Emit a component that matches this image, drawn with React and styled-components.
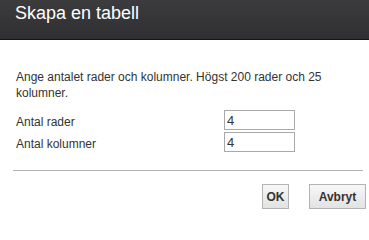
import React from "react";
import styled, { createGlobalStyle } from "styled-components";

const Global = createGlobalStyle`
  html, body { margin: 0; padding: 0; background: #fff; }
  body { font-family: "Liberation Sans", Arial, sans-serif; }
`;

const Dialog = styled.div`
  width: 369px;
  height: 216px;
  background: #fff;
  display: flex;
  flex-direction: column;
  overflow: hidden;
`;

const Header = styled.div`
  height: 40px;
  box-sizing: border-box;
  padding: 3px 15px 0;
  background: linear-gradient(#3c3c3e, #2f2f31);
  border-bottom: 1px solid #141414;
`;

const Title = styled.h1`
  margin: 0;
  font-size: 18px;
  font-weight: normal;
  line-height: 21px;
  color: #fff;
`;

const Body = styled.div`
  padding: 29px 16px 0;
`;

const Intro = styled.p`
  margin: 0 0 9px;
  font-size: 12px;
  line-height: 16px;
  color: #333;
`;

const Form = styled.div`
  display: grid;
  grid-template-columns: 208px 71px;
  row-gap: 2px;
`;

const Label = styled.label`
  align-self: end;
  font-size: 12px;
  line-height: 16px;
  color: #333;
`;

const Input = styled.input`
  width: 71px;
  height: 20px;
  box-sizing: border-box;
  margin: 0;
  padding: 0 2px;
  border: 1px solid #a9a9a9;
  font-family: "Liberation Sans", Arial, sans-serif;
  font-size: 13px;
  color: #333;
  outline: none;
`;

const Separator = styled.hr`
  margin: 18px 6px 0 13px;
  border: 0;
  border-top: 1px solid #b4b4b4;
  height: 0;
`;

const Footer = styled.div`
  display: flex;
  justify-content: flex-end;
  gap: 20px;
  padding: 13px 3px 0 0;
`;

const Button = styled.button`
  width: ${(p) => p.$w}px;
  height: 25px;
  padding: 0;
  margin: 0;
  border: 1px solid #b3b3b3;
  background: linear-gradient(#f7f7f7, #e2e2e2);
  font-family: "Liberation Sans", Arial, sans-serif;
  font-weight: bold;
  font-size: 12px;
  color: #333;
`;

export default function App() {
  return (
    <>
      <Global />
      <Dialog>
        <Header>
          <Title>Skapa en tabell</Title>
        </Header>
        <Body>
          <Intro>
            Ange antalet rader och kolumner. Högst 200 rader och 25 kolumner.
          </Intro>
          <Form>
            <Label>Antal rader</Label>
            <Input defaultValue="4" />
            <Label>Antal kolumner</Label>
            <Input defaultValue="4" />
          </Form>
        </Body>
        <Separator />
        <Footer>
          <Button $w={27}>OK</Button>
          <Button $w={57}>Avbryt</Button>
        </Footer>
      </Dialog>
    </>
  );
}
